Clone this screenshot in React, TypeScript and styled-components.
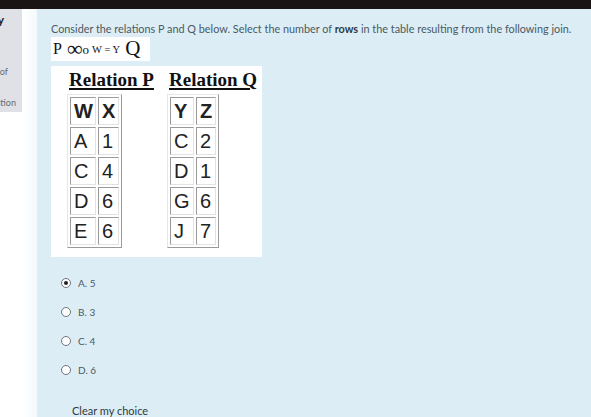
import React from "react";
import styled, { createGlobalStyle } from "styled-components";

const Global = createGlobalStyle`
  html, body { margin: 0; padding: 0; background: #ffffff; }
  body { width: 591px; height: 417px; overflow: hidden; font-family: Lato, "Open Sans", sans-serif; }
`;

const Page = styled.div`
  width: 591px;
  height: 417px;
  display: flex;
  flex-direction: column;
  overflow: hidden;
`;

const TopBar = styled.div`
  height: 9px;
  background: #1b1414;
  flex: none;
`;

const Body = styled.div`
  flex: 1;
  display: flex;
  align-items: stretch;
  min-height: 0;
`;

const Sidebar = styled.div`
  width: 22px;
  height: 103px;
  background: #dfe1e6;
  flex: none;
  display: flex;
  flex-direction: column;
  overflow: hidden;
  padding-top: 5px;
  box-sizing: border-box;
`;

const SideLine = styled.div<{ $top: number; $pad: number; $bold?: boolean }>`
  display: flex;
  justify-content: flex-end;
  white-space: nowrap;
  margin-top: ${(p) => p.$top}px;
  padding-right: ${(p) => p.$pad}px;
  font-size: ${(p) => (p.$bold ? 12 : 9)}px;
  font-weight: ${(p) => (p.$bold ? 700 : 400)};
  color: ${(p) => (p.$bold ? "#222" : "#666c72")};
  line-height: 12px;
`;

const Gutter = styled.div`
  width: 15px;
  flex: none;
  background: linear-gradient(to right, #ffffff, #f3f9fc);
`;

const Main = styled.div`
  flex: 1;
  background: #dcedf5;
  padding: 14px 0 0 14px;
  display: flex;
  flex-direction: column;
  align-items: flex-start;
`;

const Question = styled.div`
  font-size: 10.85px;
  line-height: 12px;
  color: #4b5a63;
  white-space: nowrap;
  b { color: #2e3b44; font-weight: 700; }
`;

const Formula = styled.div`
  margin-top: 2px;
  background: #ffffff;
  height: 24px;
  padding: 0 10px 0 2px;
  display: flex;
  align-items: center;
  font-family: "Liberation Serif", serif;
  color: #111;
`;

const FPart = styled.span<{ $size: number; $gap?: number; $shift?: number }>`
  font-size: ${(p) => p.$size}px;
  margin-left: ${(p) => p.$gap ?? 0}px;
  line-height: 1;
  position: relative;
  top: ${(p) => p.$shift ?? 0}px;
`;

const Figure = styled.div`
  margin-top: 5px;
  background: #ffffff;
  width: 211px;
  height: 192px;
  box-sizing: border-box;
  padding: 3px 0 0 16px;
  display: grid;
  grid-template-columns: 100px 95px;
  grid-template-rows: 22px auto;
  row-gap: 3px;
`;

const Title = styled.div`
  font-family: "Liberation Serif", serif;
  font-weight: 700;
  font-size: 19px;
  line-height: 22px;
  color: #111;
  padding-left: 2px;
  span {
    text-decoration: underline;
    text-decoration-thickness: 2px;
    text-underline-offset: 2px;
  }
`;

const Table = styled.table`
  border-collapse: separate;
  border-spacing: 2px;
  border: 1px solid;
  border-color: #e6e6e6 #9a9a9a #9a9a9a #e6e6e6;
  align-self: start;
  justify-self: start;
`;

const Cell = styled.td<{ $w: number; $head?: boolean }>`
  width: ${(p) => p.$w}px;
  height: 28px;
  box-sizing: border-box;
  padding: 0 0 0 3px;
  border: 1px solid;
  border-color: #9a9a9a #e2e2e2 #e2e2e2 #9a9a9a;
  font-family: "Liberation Sans", Arial, sans-serif;
  font-size: 20px;
  font-weight: ${(p) => (p.$head ? 700 : 400)};
  color: #222;
  line-height: 26px;
`;

const Options = styled.div`
  margin-top: 19px;
  padding-left: 10px;
  display: flex;
  flex-direction: column;
  gap: 15px;
`;

const Option = styled.label`
  display: flex;
  align-items: center;
  height: 14px;
  font-size: 10px;
  color: #4b5a63;
`;

const Radio = styled.span<{ $on?: boolean }>`
  width: 8px;
  height: 8px;
  border: 1px solid #6f767c;
  border-radius: 50%;
  background: #fff;
  margin-right: 7px;
  display: flex;
  align-items: center;
  justify-content: center;
  &::after {
    content: "";
    width: 4px;
    height: 4px;
    border-radius: 50%;
    background: ${(p) => (p.$on ? "#222" : "transparent")};
  }
`;

const Clear = styled.div`
  margin-top: 27px;
  padding-left: 21px;
  font-size: 11px;
  line-height: 13px;
  color: #2f3a42;
`;

const pRows = [
  ["A", "1"],
  ["C", "4"],
  ["D", "6"],
  ["E", "6"],
];
const qRows = [
  ["C", "2"],
  ["D", "1"],
  ["G", "6"],
  ["J", "7"],
];

function Rel({ head, rows, w }: { head: [string, string]; rows: string[][]; w: [number, number] }) {
  return (
    <Table>
      <tbody>
        <tr>
          <Cell $w={w[0]} $head>{head[0]}</Cell>
          <Cell $w={w[1]} $head>{head[1]}</Cell>
        </tr>
        {rows.map((r, i) => (
          <tr key={i}>
            <Cell $w={w[0]}>{r[0]}</Cell>
            <Cell $w={w[1]}>{r[1]}</Cell>
          </tr>
        ))}
      </tbody>
    </Table>
  );
}

export default function App() {
  return (
    <Page>
      <Global />
      <TopBar />
      <Body>
        <Sidebar>
          <SideLine $top={0} $pad={18} $bold>y</SideLine>
          <SideLine $top={40} $pad={14}>of</SideLine>
          <SideLine $top={19} $pad={6}>Flag question</SideLine>
        </Sidebar>
        <Gutter />
        <Main>
          <Question>
            Consider the relations P and Q below. Select the number of <b>rows</b> in the table resulting from the following join.
          </Question>
          <Formula>
            <FPart $size={16}>P</FPart>
            <FPart $size={22} $gap={5}>∞</FPart>
            <FPart $size={13} $shift={1}>o</FPart>
            <FPart $size={10.5} $gap={3} $shift={1}>W = Y</FPart>
            <FPart $size={21} $gap={5}>Q</FPart>
          </Formula>
          <Figure>
            <Title><span>Relation P</span></Title>
            <Title><span>Relation Q</span></Title>
            <Rel head={["W", "X"]} rows={pRows} w={[26, 21]} />
            <Rel head={["Y", "Z"]} rows={qRows} w={[24, 20]} />
          </Figure>
          <Options>
            <Option><Radio $on />A. 5</Option>
            <Option><Radio />B. 3</Option>
            <Option><Radio />C. 4</Option>
            <Option><Radio />D. 6</Option>
          </Options>
          <Clear>Clear my choice</Clear>
        </Main>
      </Body>
    </Page>
  );
}
